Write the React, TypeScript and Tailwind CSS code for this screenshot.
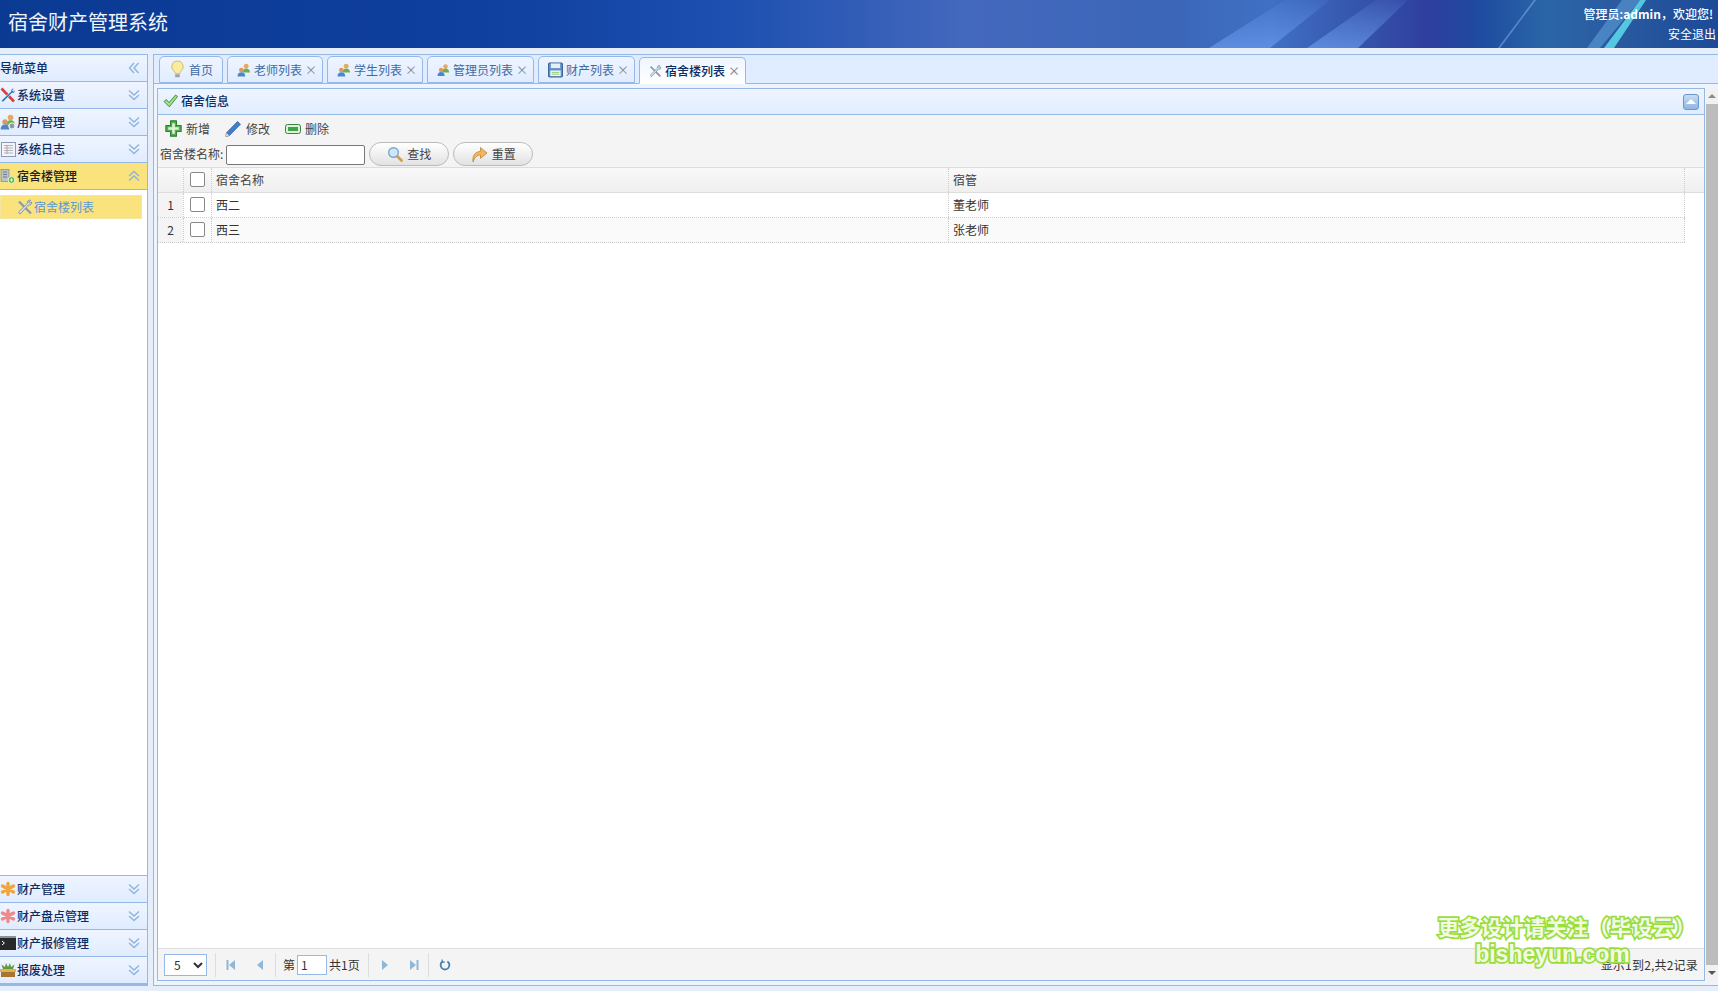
import type { ReactNode } from "react"

function Chevrons({ dir = "down", color = "#8fb4dc" }: { dir?: "down" | "up" | "left"; color?: string }) {
  const rotate = dir === "up" ? "rotate-180" : dir === "left" ? "rotate-90" : ""
  return (
    <svg width="12" height="12" viewBox="0 0 12 12" className={rotate} fill="none" stroke={color} strokeWidth="1.4">
      <path d="M1 1.5 6 6l5-4.5M1 6l5 4.5L11 6" />
    </svg>
  )
}

function Tools({ size = 16 }: { size?: number }) {
  return (
    <svg width={size} height={size} viewBox="0 0 16 16" fill="none">
      <path d="M2 2.5 14 14.5" stroke="#8a9aa8" strokeWidth="2.2" />
      <path d="M13.5 1.2c-2-.6-3.6 1.2-3 3L1.6 13l1.5 2.2L11.5 6c1.8.6 3.6-1 3-3l-1.6 1.2-1.2-.8z" fill="#d5dfe8" stroke="#5f7c96" strokeWidth=".7" />
    </svg>
  )
}

function RedTools() {
  return (
    <svg width="16" height="16" viewBox="0 0 16 16" fill="none">
      <path d="M1.5 1.5 14 14.5" stroke="#d8403c" strokeWidth="2.6" />
      <path d="M14 1.5c-2-.6-3.6 1.2-3 3L1.5 13.5l1.3 1.7L12 6c1.8.6 3.4-1 2.8-3l-1.5 1.2-1-.8z" fill="#2f74c0" stroke="#e8eef4" strokeWidth=".6" />
    </svg>
  )
}

function People({ gear = false, size = 18 }: { gear?: boolean; size?: number }) {
  return (
    <svg width={size} height={size} viewBox="0 0 16 16">
      <circle cx="10.5" cy="3.6" r="2.8" fill="#e7a860" />
      <path d="M6.5 11c0-3.4 1.6-4.8 4-4.8s4.4 1.4 4.4 4.8z" fill="#6fae4f" />
      <circle cx="5" cy="8" r="2.7" fill="#d99a62" />
      <path d="M.6 15.4c0-3.2 1.8-4.8 4.4-4.8s4.4 1.6 4.4 4.8z" fill="#4a86c8" />
      {gear && <circle cx="12" cy="12" r="3" fill="#8d99a5" stroke="#e8edf2" strokeWidth="1.2" />}
    </svg>
  )
}

function LogIcon() {
  return (
    <svg width="15" height="15" viewBox="0 0 15 15">
      <rect x=".5" y=".5" width="14" height="14" fill="#f2f5f8" stroke="#8c9cb0" />
      <path d="M3 3.5h9M3 6h9M3 8.5h9M3 11h9" stroke="#a9b6c6" />
      <path d="M6 3v9" stroke="#e09090" />
    </svg>
  )
}

function Building() {
  return (
    <svg width="16" height="16" viewBox="0 0 16 16">
      <rect x="1" y="1.5" width="8" height="12" fill="#b9c3cc" stroke="#7c8894" strokeWidth=".7" />
      <path d="M3 4h4M3 6.5h4M3 9h4" stroke="#6f7b88" />
      <circle cx="11.5" cy="12" r="3.4" fill="#5cb531" stroke="#eef7e2" />
      <path d="M9.8 12h3.4M11.5 10.3v3.4" stroke="#fff" />
    </svg>
  )
}

function Flower({ color }: { color: string }) {
  return (
    <svg width="16" height="16" viewBox="0 0 16 16" stroke={color} strokeWidth="3.4" strokeLinecap="round">
      <path d="M8 2.5v11M2.5 5l11 6M13.5 5l-11 6" />
    </svg>
  )
}

function Terminal() {
  return (
    <svg width="16" height="14" viewBox="0 0 16 14">
      <rect width="16" height="14" fill="#26292c" />
      <rect width="16" height="2" fill="#8d9298" />
      <path d="M2 5l2.4 2L2 9" stroke="#fff" fill="none" />
    </svg>
  )
}

function Crate() {
  return (
    <svg width="16" height="16" viewBox="0 0 16 16">
      <path d="M3 7 1.5 2.5 5 5l1-4 2 4 2-4 1 4 3.5-2.5L13 7z" fill="#5d9a3a" />
      <rect x="0" y="7" width="16" height="3" fill="#e5ae56" />
      <rect x="1" y="10" width="14" height="5" fill="#a9742f" />
    </svg>
  )
}

function Bulb() {
  return (
    <svg width="17" height="19" viewBox="0 0 16 18">
      <path d="M8 1a5.4 5.4 0 0 0-3 9.9c.6.6.8 1.4.8 2.1h4.4c0-.7.2-1.5.8-2.1A5.4 5.4 0 0 0 8 1z" fill="#fbeb9c" stroke="#c9b45a" strokeWidth=".8" />
      <rect x="5.8" y="13.4" width="4.4" height="3" rx=".8" fill="#9aa4ac" />
    </svg>
  )
}

function Disk() {
  return (
    <svg width="16" height="16" viewBox="0 0 16 16">
      <rect x=".5" y=".5" width="15" height="15" rx="1" fill="#5c8fc8" stroke="#2f5f9a" />
      <rect x="3" y="1" width="10" height="5" fill="#e8eff6" />
      <rect x="2.5" y="8.5" width="11" height="6" fill="#f5f8f0" />
      <path d="M4 10.5h8M4 12.5h8" stroke="#8cc46a" />
    </svg>
  )
}

function Check() {
  return (
    <svg width="15" height="14" viewBox="0 0 15 14">
      <path d="M1 7.5 3.4 5.6l2.7 3L12.6 1 14.5 2.6 6.3 12.8z" fill="#a5dd90" stroke="#2f8a32" strokeWidth=".9" />
    </svg>
  )
}

function PlusIcon() {
  return (
    <svg width="17" height="17" viewBox="0 0 16 16">
      <path d="M5.2 .8h5.6v4.4h4.4v5.6h-4.4v4.4H5.2v-4.4H.8V5.2h4.4z" fill="#54b04c" stroke="#2d7d38" strokeWidth="1" strokeLinejoin="round" />
      <path d="M6.8 3h2.4v3.8H13v2.4H9.2V13H6.8V9.2H3V6.8h3.8z" fill="#dff3d6" />
    </svg>
  )
}

function Pencil() {
  return (
    <svg width="17" height="17" viewBox="0 0 16 16">
      <path d="M4 14.8.8 15.4l.6-3.4L11.8 1.4l2.8 2.6z" fill="#3f7fd0" stroke="#234f8f" strokeWidth=".6" />
      <path d="M1.4 12 .8 15.4 4 14.8z" fill="#f4d58a" />
    </svg>
  )
}

function MinusIcon() {
  return (
    <svg width="16" height="12" viewBox="0 0 16 12">
      <rect x=".5" y="1.5" width="15" height="9" rx="2" fill="#dff0d8" stroke="#2f8a3c" />
      <rect x="3" y="4" width="10" height="4" fill="#3ea34a" />
    </svg>
  )
}

function Lens() {
  return (
    <svg width="16" height="16" viewBox="0 0 16 16">
      <path d="M9.5 9.5 14.5 14.5" stroke="#d59a4a" strokeWidth="2.6" strokeLinecap="round" />
      <circle cx="6.5" cy="6.5" r="4.8" fill="#cfe6f8" stroke="#7da6c8" strokeWidth="1.4" />
    </svg>
  )
}

function ArrowIcon() {
  return (
    <svg width="17" height="17" viewBox="0 0 17 17">
      <path d="M2 16C1 9 5 5.6 9.5 5.4V1.5L16 7l-6.5 5.4V9C6 9 3.6 11.4 2 16z" fill="#f3b85e" stroke="#b57a26" strokeWidth=".7" />
    </svg>
  )
}

function NavRow({ icon, label, open = false }: { icon: ReactNode; label: string; open?: boolean }) {
  return (
    <div
      className={`flex h-[27px] items-center border-b border-[#95b8e7] pr-[7px] ${
        open
          ? "bg-[#fae27d] text-[#222]"
          : "bg-gradient-to-b from-[#eff5ff] to-[#e0ecff] text-[#0e2d5f]"
      }`}
    >
      <span className="flex w-[16px] items-center justify-center">{icon}</span>
      <span className="ml-px flex-1 text-[12px] font-medium">{label}</span>
      <Chevrons dir={open ? "up" : "down"} />
    </div>
  )
}

function Tab({ icon, label, width, active = false, closable = true }: { icon: ReactNode; label: string; width: string; active?: boolean; closable?: boolean }) {
  return (
    <div
      className={`flex h-[27px] items-center gap-[3px] rounded-t-[5px] border border-[#95b8e7] pl-[9px] text-[12px] ${width} ${
        active
          ? "-mb-px border-b-white bg-gradient-to-b from-[#eff5ff] to-white font-medium text-[#0e2d5f]"
          : "bg-gradient-to-b from-[#eff5ff] to-[#e0ecff] text-[#416aa3]"
      }`}
    >
      {icon}
      <span className="flex-1 whitespace-nowrap">{label}</span>
      {closable && <span className="mr-[5px] text-[12px] leading-none text-[#7f8c99]">×</span>}
    </div>
  )
}

function PagerArrow({ kind }: { kind: "first" | "prev" | "next" | "last" }) {
  const points = kind === "first" || kind === "prev" ? "9,1 9,11 3,6" : "3,1 3,11 9,6"
  return (
    <svg width="12" height="12" viewBox="0 0 12 12" fill="#8fb8d8">
      <polygon points={points} />
      {kind === "first" && <rect x="0.5" y="1" width="2" height="10" />}
      {kind === "last" && <rect x="9.5" y="1" width="2" height="10" />}
    </svg>
  )
}

function Sep({ ml, mr }: { ml: string; mr: string }) {
  return <span className={`h-[24px] w-px bg-[#ddd] ${ml} ${mr}`} />
}

function Round({ icon, label, width }: { icon: ReactNode; label: string; width: string }) {
  return (
    <button className={`flex h-[24px] items-center justify-center gap-[4px] rounded-full border border-[#bbb] bg-gradient-to-b from-white to-[#e2e2e2] text-[12px] text-[#444] ${width}`}>
      {icon}
      {label}
    </button>
  )
}

function Row({ n, name, who, odd = false }: { n: number; name: string; who: string; odd?: boolean }) {
  return (
    <div className={`flex h-[25px] w-[1527px] items-center border-b border-dotted border-[#ccc] ${odd ? "bg-[#fafafa]" : "bg-white"}`}>
      <div className="flex h-full w-[25px] items-center justify-center bg-[#f4f4f4] text-[12px] text-[#333]">{n}</div>
      <div className="flex h-full w-[29px] items-center justify-center border-x border-dotted border-[#ccc]">
        <span className="-mt-px h-[15px] w-[15px] rounded-[2px] border border-[#888] bg-white" />
      </div>
      <div className="flex h-full w-[737px] items-center border-r border-dotted border-[#ccc] pl-[4px] text-[12px] text-[#333]">{name}</div>
      <div className="flex h-full w-[736px] items-center border-r border-dotted border-[#ccc] pl-[4px] text-[12px] text-[#333]">{who}</div>
    </div>
  )
}

export default function App() {
  return (
    <div className="relative flex h-[991px] w-[1718px] flex-col overflow-hidden bg-[#e6eefa] font-['Noto_Sans_CJK_SC','Liberation_Sans',sans-serif]">
      {/* top banner */}
      <header className="relative flex h-[48px] items-center justify-between overflow-hidden bg-[linear-gradient(90deg,#0b3a93_0%,#0f3f9f_28%,#1c4fb0_42%,#4368bd_56%,#3c66b8_68%,#3f70c4_74%,#3450a8_80%,#2f3f9f_83%,#1e4a9f_86%,#2a66a8_90%,#2a5aa0_94%,#1c4a98_100%)] pl-[8px]">
        <svg className="absolute inset-0" width="1718" height="48" viewBox="0 0 1718 48">
          <defs>
            <linearGradient id="streak" x1="0" y1="1" x2="0" y2="0">
              <stop offset="0" stopColor="#6d9ef0" stopOpacity=".65" />
              <stop offset="1" stopColor="#6d9ef0" stopOpacity=".1" />
            </linearGradient>
          </defs>
          <polygon points="1209,48 1270,48 1330,0 1285,0" fill="url(#streak)" />
          <polygon points="1307,48 1358,48 1408,0 1376,0" fill="url(#streak)" />
          <polygon points="1498,48 1500,48 1536,0 1534,0" fill="#8fbcf0" opacity=".5" />
          <polygon points="1587,48 1600,48 1640,0 1622,0" fill="#5f9ed8" opacity=".6" />
          <polygon points="1604,48 1614,48 1646,0 1640,0" fill="#5fe4f0" opacity=".8" />
        </svg>
        <h1 className="relative -mt-[5px] text-[20px] font-normal text-[#f1f5fb]">宿舍财产管理系统</h1>
        <div className="relative flex flex-col items-end pr-[2px] text-[12px] leading-[20px] text-white">
          <span className="mr-[3px] font-medium">管理员:<b>admin</b>，欢迎您!</span>
          <span>安全退出</span>
        </div>
      </header>

      <div className="flex flex-1 pt-[6px] pb-[5px]">
        {/* west panel */}
        <aside className="flex w-[148px] flex-col border-r border-[#95b8e7] border-t border-b-2 bg-white">
          <div className="flex h-[27px] items-center justify-between border-b border-[#95b8e7] bg-gradient-to-b from-[#eff5ff] to-[#e0ecff] pr-[7px] text-[12px] font-medium text-[#0e2d5f]">
            <span>导航菜单</span>
            <Chevrons dir="left" />
          </div>
          <NavRow icon={<RedTools />} label="系统设置" />
          <NavRow icon={<People gear size={16} />} label="用户管理" />
          <NavRow icon={<LogIcon />} label="系统日志" />
          <NavRow icon={<Building />} label="宿舍楼管理" open />
          <div className="mt-[5px] flex h-[24px] w-[142px] items-center gap-[1px] border border-[#f5e6a0] bg-[#fae27d] pl-[16px] text-[12px] text-[#5a9ad5]">
            <Tools />
            宿舍楼列表
          </div>
          <div className="flex-1" />
          <div className="border-t border-[#95b8e7]">
            <NavRow icon={<Flower color="#f0a63c" />} label="财产管理" />
            <NavRow icon={<Flower color="#f08a8a" />} label="财产盘点管理" />
            <NavRow icon={<Terminal />} label="财产报修管理" />
            <NavRow icon={<Crate />} label="报废处理" />
          </div>
        </aside>

        {/* center */}
        <main className="ml-[5px] flex flex-1 flex-col border-l border-b border-[#95b8e7]">
          <div className="flex h-[30px] items-end gap-[4px] border-y border-[#95b8e7] bg-[#e0ecff] pl-[5px]">
            <Tab icon={<Bulb />} label="首页" width="w-[64px]" closable={false} />
            <Tab icon={<People />} label="老师列表" width="w-[96px]" />
            <Tab icon={<People />} label="学生列表" width="w-[96px]" />
            <Tab icon={<People />} label="管理员列表" width="w-[107px]" />
            <Tab icon={<Disk />} label="财产列表" width="w-[97px]" />
            <Tab icon={<Tools size={20} />} label="宿舍楼列表" width="w-[107px]" active />
          </div>

          <div className="flex flex-1 bg-[#eef4fd] pt-[4px] pb-[4px] pl-[3px]">
            <section className="flex w-[1548px] flex-col border border-[#95b8e7] bg-white">
              <div className="flex h-[26px] items-center justify-between border-b border-[#95b8e7] bg-gradient-to-b from-[#eff5ff] to-[#e0ecff] pl-[5px] pr-[5px]">
                <div className="flex items-center gap-[3px] pb-[2px] text-[12px] font-medium text-[#0e2d5f]">
                  <Check />
                  宿舍信息
                </div>
                <span className="flex h-[16px] w-[16px] items-center justify-center rounded-[3px] border border-[#6d96cc] bg-gradient-to-b from-[#c6dcf6] to-[#8fb4e4]">
                  <span className="h-0 w-0 border-x-[5px] border-b-[5px] border-x-transparent border-b-white" />
                </span>
              </div>

              <div className="flex h-[52px] flex-col bg-[#f4f4f4]">
                <div className="flex h-[27px] items-center pl-[7px] text-[12px] text-[#444]">
                  <span className="flex w-[60px] items-center gap-[4px]"><PlusIcon />新增</span>
                  <span className="flex w-[60px] items-center gap-[4px]"><Pencil />修改</span>
                  <span className="flex items-center gap-[4px]"><MinusIcon />删除</span>
                </div>
                <div className="flex items-center pl-[2px] text-[12px] text-[#444]">
                  <span>宿舍楼名称:</span>
                  <input className="mt-[2px] ml-[3px] h-[20px] w-[139px] rounded-[2px] border border-[#777] bg-white" />
                  <span className="ml-[4px]"><Round icon={<Lens />} label="查找" width="w-[80px]" /></span>
                  <span className="ml-[4px]"><Round icon={<ArrowIcon />} label="重置" width="w-[80px]" /></span>
                </div>
              </div>

              <div className="flex h-[26px] items-center border-y border-[#ddd] bg-gradient-to-b from-[#f9f9f9] to-[#efefef] text-[12px] text-[#444]">
                <div className="h-full w-[25px]" />
                <div className="flex h-full w-[29px] items-center justify-center border-x border-dotted border-[#ccc]">
                  <span className="-mt-px h-[15px] w-[15px] rounded-[2px] border border-[#888] bg-white" />
                </div>
                <div className="flex h-full w-[737px] items-center border-r border-dotted border-[#ccc] pl-[4px]">宿舍名称</div>
                <div className="flex h-full w-[736px] items-center border-r border-dotted border-[#ccc] pl-[4px]">宿管</div>
              </div>

              <Row n={1} name="西二" who="董老师" />
              <Row n={2} name="西三" who="张老师" odd />

              <div className="flex-1 bg-white" />

              <div className="flex h-[32px] items-center border-t border-[#ddd] bg-[#f4f4f4] pl-[6px] pr-[6px] text-[12px] text-[#333]">
                <select defaultValue="5" className="h-[22px] w-[43px] rounded-none border border-[#95b8e7] bg-white pl-[5px] text-[12px]">
                  <option>5</option>
                </select>
                <Sep ml="ml-[8px]" mr="mr-[10px]" />
                <PagerArrow kind="first" />
                <span className="w-[16px]" />
                <PagerArrow kind="prev" />
                <Sep ml="ml-[9px]" mr="mr-[7px]" />
                第
                <input defaultValue="1" className="mx-[2px] h-[20px] w-[30px] border border-[#95b8e7] bg-white pl-[3px] text-[12px]" />
                共1页
                <Sep ml="ml-[8px]" mr="mr-[10px]" />
                <PagerArrow kind="next" />
                <span className="w-[16px]" />
                <PagerArrow kind="last" />
                <Sep ml="ml-[9px]" mr="mr-[10px]" />
                <svg width="12" height="12" viewBox="0 0 12 12" fill="none" stroke="#3f7fb0" strokeWidth="1.8">
                  <path d="M3.6 2.4a4.4 4.4 0 1 0 4.8 0" />
                  <path d="M3.2 .6v2.6h2.6" strokeWidth="1.2" />
                </svg>
                <span className="ml-auto tracking-[0.2px]">显示1到2,共2记录</span>
              </div>
            </section>

            {/* page scrollbar */}
            <div className="ml-[1px] flex flex-1 flex-col items-center bg-[#f1f1f1]">
              <div className="flex h-[16px] items-center"><span className="h-0 w-0 border-x-[4px] border-b-[4px] border-x-transparent border-b-[#8a8a8a]" /></div>
              <div className="w-full flex-1 bg-[#bcbcbc]" />
              <div className="flex h-[16px] items-center"><span className="h-0 w-0 border-x-[4px] border-t-[4px] border-x-transparent border-t-[#555]" /></div>
            </div>
          </div>
        </main>
      </div>

      {/* watermark sits over the pager */}
      <div className="absolute left-[1436px] top-[916px] flex w-[262px] flex-col items-center leading-none text-[#f4fbe4]">
        <span className="whitespace-nowrap text-[21px] font-bold tracking-[0.5px] [-webkit-text-stroke:3.5px_#9ade3e] [paint-order:stroke_fill]">更多设计请关注（毕设云）</span>
        <span className="-ml-[29px] mt-[6px] font-['Liberation_Sans',sans-serif] text-[23px] font-bold [-webkit-text-stroke:3.5px_#9ade3e] [paint-order:stroke_fill]">bisheyun.com</span>
      </div>
    </div>
  )
}
